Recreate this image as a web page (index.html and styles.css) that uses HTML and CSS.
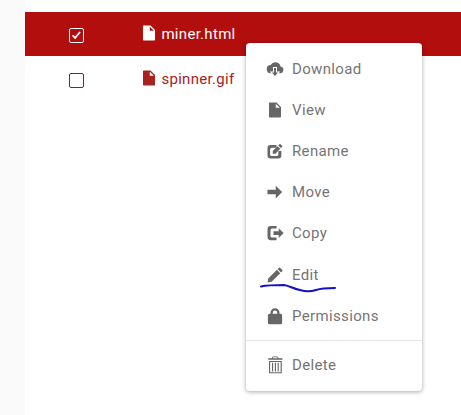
FILE: index.html
```html
<!DOCTYPE html>
<html lang="en">
<head>
<meta charset="utf-8">
<title>Files</title>
<link rel="stylesheet" href="styles.css">
</head>
<body>
<div class="page">
  <aside class="rail"></aside>
  <main class="main">
    <div class="row selected">
      <span class="check checked">
        <svg viewBox="0 0 15 15" class="tick"><path d="M2.800 7.200 5.900 10.300 11.600 3.400" fill="none" stroke="#fff" stroke-width="2"/></svg>
      </span>
      <span class="name">
        <svg class="file" viewBox="0 0 24 24"><path d="M14 2H5a1 1 0 0 0-1 1v18a1 1 0 0 0 1 1h14a1 1 0 0 0 1-1V8zm-1 7V3.500L18.500 9z"/></svg>
        <span class="label">miner.html</span>
      </span>
    </div>
    <div class="row">
      <span class="check"></span>
      <span class="name">
        <svg class="file" viewBox="0 0 24 24"><path d="M14 2H5a1 1 0 0 0-1 1v18a1 1 0 0 0 1 1h14a1 1 0 0 0 1-1V8zm-1 7V3.500L18.500 9z"/></svg>
        <span class="label">spinner.gif</span>
      </span>
    </div>
  </main>
  <nav class="menu">
    <div class="group">
      <a class="item"><svg viewBox="0 0 24 24"><path d="M19.300 8.500A7 7 0 0 0 6.200 6.800 5.200 5.200 0 0 0 6.500 17.500h11.500a4.500 4.500 0 0 0 1.300-9z"/><path class="knock" d="M10 10h4v6h3.500L12 22.500 6.500 16H10z"/></svg>Download</a>
      <a class="item"><svg viewBox="0 0 24 24"><path d="M14 2H5a1 1 0 0 0-1 1v18a1 1 0 0 0 1 1h14a1 1 0 0 0 1-1V8zm-1 7V3.500L18.500 9z"/></svg>View</a>
      <a class="item"><svg viewBox="0 0 24 24"><path d="M20.500 12v6a4 4 0 0 1-4 4H6a4 4 0 0 1-4-4V8a4 4 0 0 1 4-4h8v3.500H7.500a2 2 0 0 0-2 2v7a2 2 0 0 0 2 2h7a2 2 0 0 0 2-2V12z"/><path d="M9 15.500v-3.500l6.500-6.500 3.500 3.500-6.500 6.500zM19.900 8.100l-3.500-3.500L18 3a1 1 0 0 1 1.400 0l2.100 2.100a1 1 0 0 1 0 1.400z"/></svg>Rename</a>
      <a class="item"><svg viewBox="0 0 24 24"><path d="M2 9h11V3.500l8.500 8.500-8.500 8.500V15H2z"/></svg>Move</a>
      <a class="item"><svg viewBox="0 0 24 24"><path d="M14 2.500H6.500A4.500 4.500 0 0 0 2 7v10a4.500 4.500 0 0 0 4.500 4.500H14V18H8a2 2 0 0 1-2-2V8a2 2 0 0 1 2-2h6z"/><path d="M10 9.500h7V5.500l6.500 6.500-6.500 6.500v-4h-7z"/></svg>Copy</a>
      <a class="item"><svg viewBox="0 0 24 24"><path d="M2 22l1-5.500L14.500 5l4.500 4.500L7.500 21zM20 8.500 15.500 4l1.800-1.800a1 1 0 0 1 1.400 0l3.100 3.100a1 1 0 0 1 0 1.400z"/></svg>Edit</a>
      <a class="item"><svg viewBox="0 0 24 24"><path d="M19.500 9H18V7.500a6 6 0 0 0-12 0V9H4.500A2 2 0 0 0 2.500 11v10a2 2 0 0 0 2 2h15a2 2 0 0 0 2-2V11a2 2 0 0 0-2-2zM9 7.500a3 3 0 0 1 6 0V9H9z"/></svg>Permissions</a>
    </div>
    <div class="group">
      <a class="item"><svg class="bin" viewBox="0 0 24 24"><path fill-rule="evenodd" d="M9 .5h6.500L17 3h5v2H3V3h4.500zM9.500 1.800 9 3h6.500L15 1.800zM4 6.500h17V23H4zM5.500 8v13.500h14V8z"/><path d="M8 9h1.500v11.500H8zM11.800 9h1.500v11.500h-1.500zM15.500 9H17v11.500h-1.500z"/></svg>Delete</a>
    </div>
  </nav>
  <svg class="scribble" viewBox="0 0 461 415"><path d="M261 286.500C268 285 278 285 284 285 290 286 294 289 300 290 306 292 310 292 316 290 322 288 328 288 335 288" fill="none" stroke="#1212c4" stroke-width="2" stroke-linecap="round"/></svg>
</div>
</body>
</html>
```

FILE: styles.css
```css
* { box-sizing: border-box; }
html, body { margin: 0; height: 100%; }
body { font-family: Roboto, "Liberation Sans", sans-serif; background: #fff; overflow: hidden; }
.page { position: relative; display: flex; width: 461px; height: 415px; }
.rail { width: 25px; background: #fafafa; }
.main { flex: 1; padding-top: 12px; background: #fff; }
.row { display: flex; align-items: flex-start; height: 45px; color: #a82222; padding-left: 44px; }
.row.selected { height: 44px; margin-bottom: 1px; background: #b20e0e; color: #fff; }
.check { display: flex; width: 15px; height: 15px; margin-top: 16px; border: 1px solid #b20e0e; border-radius: 2px; background: #fff; }
.check.checked { background: #b20e0e; border-color: #fff; }
.tick { width: 13px; height: 13px; }
.name { display: flex; align-items: flex-start; gap: 3.400px; margin: 12px 0 0 56px; font-size: 15px; line-height: 18px; letter-spacing: .3px; }
.label { margin-top: 1px; }
.file { width: 18px; height: 18px; fill: currentColor; }
.menu { position: absolute; left: 246px; top: 43px; width: 176px; height: 348px; padding-top: 5.500px; background: #fff; border-radius: 4px; box-shadow: 0 1px 4px rgba(0,0,0,.35); }
.group + .group { margin-top: 4px; border-top: 1px solid #e6e6e6; padding-top: 3.500px; }
.item { display: flex; align-items: center; gap: 8px; height: 41.100px; padding-left: 20px; color: #757575; font-size: 15px; letter-spacing: .35px; }
.item svg { flex: none; width: 18px; height: 18px; fill: #666; }
.item svg .knock { stroke: #fff; stroke-width: 1.400px; }
.item svg.bin { fill: #666; }
.scribble { position: absolute; left: 0; top: 0; width: 461px; height: 415px; pointer-events: none; }
```
